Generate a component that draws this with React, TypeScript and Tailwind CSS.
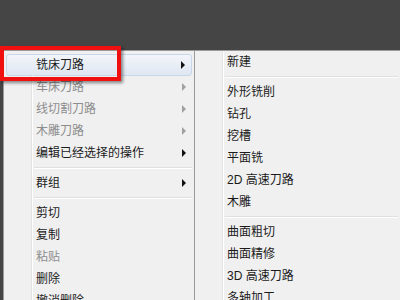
type Item = { label?: string; sep?: boolean; disabled?: boolean; sub?: boolean; active?: boolean }

const leftItems: Item[] = [
  { label: '铣床刀路', sub: true, active: true },
  { label: '车床刀路', sub: true, disabled: true },
  { label: '线切割刀路', sub: true, disabled: true },
  { label: '木雕刀路', sub: true, disabled: true },
  { label: '编辑已经选择的操作', sub: true },
  { sep: true },
  { label: '群组', sub: true },
  { sep: true },
  { label: '剪切' },
  { label: '复制' },
  { label: '粘贴', disabled: true },
  { label: '删除' },
  { label: '撤消删除' },
]

const rightItems: Item[] = [
  { label: '新建' },
  { sep: true },
  { label: '外形铣削' },
  { label: '钻孔' },
  { label: '挖槽' },
  { label: '平面铣' },
  { label: '2D 高速刀路' },
  { label: '木雕' },
  { sep: true },
  { label: '曲面粗切' },
  { label: '曲面精修' },
  { label: '3D 高速刀路' },
  { label: '多轴加工' },
]

const Arrow = ({ disabled }: { disabled?: boolean }) => (
  <span
    className={`w-0 h-0 border-y-[4px] border-l-[4px] border-y-transparent ${
      disabled ? 'border-l-[#a0a0a0]' : 'border-l-[#111]'
    }`}
  />
)

const MenuList = ({ items }: { items: Item[] }) => (
  <div className="relative h-full bg-[#f0f0f0]">
    {/* icon gutter */}
    <div className="absolute top-0 bottom-0 left-[27px] w-[2px] border-l border-[#e2e3e3] border-r border-r-white" />
    {items.map((item, i) =>
      item.sep ? (
        <div key={i} className="h-[8px] flex flex-col justify-center pl-[30px] pr-[2px]">
          <div className="h-px bg-[#e0e0e0]" />
          <div className="h-px bg-white" />
        </div>
      ) : (
        <div
          key={i}
          className={`relative mx-[2px] h-[22px] flex items-center pr-[6px] ${
            item.active
              ? 'pl-[29px] bg-gradient-to-b from-[#f2f5fa] to-[#dfe7f2] border border-[#c9d7ea] rounded-[3px]'
              : 'pl-[30px]'
          } ${item.disabled ? 'text-[#8d8d8d]' : 'text-[#1b1b1b]'}`}
        >
          <span className="flex-1 whitespace-nowrap">{item.label}</span>
          {item.sub && <Arrow disabled={item.disabled} />}
        </div>
      )
    )}
  </div>
)

export default function App() {
  return (
    <div
      className="relative w-[400px] h-[300px] overflow-hidden bg-[#454545] text-[12px]"
      style={{ fontFamily: '"Liberation Sans", "Noto Sans CJK SC", sans-serif' }}
    >
      <div className="flex pt-[50px] pl-[3px] h-full">
        <div className="w-[191px] h-[260px] border-l border-t border-[#9a9a9a] pt-[3px] bg-[#f0f0f0]">
          <MenuList items={leftItems} />
        </div>
        <div className="flex-1 border-l border-t border-[#9a9a9a] bg-[#f0f0f0]">
          <MenuList items={rightItems} />
        </div>
      </div>

      {/* red highlight box */}
      <div className="absolute left-0 top-[46px] w-[121px] h-[35px] border-[4px] border-[#f01010] shadow-[2px_2px_3px_rgba(0,0,0,0.45)]" />
    </div>
  )
}
